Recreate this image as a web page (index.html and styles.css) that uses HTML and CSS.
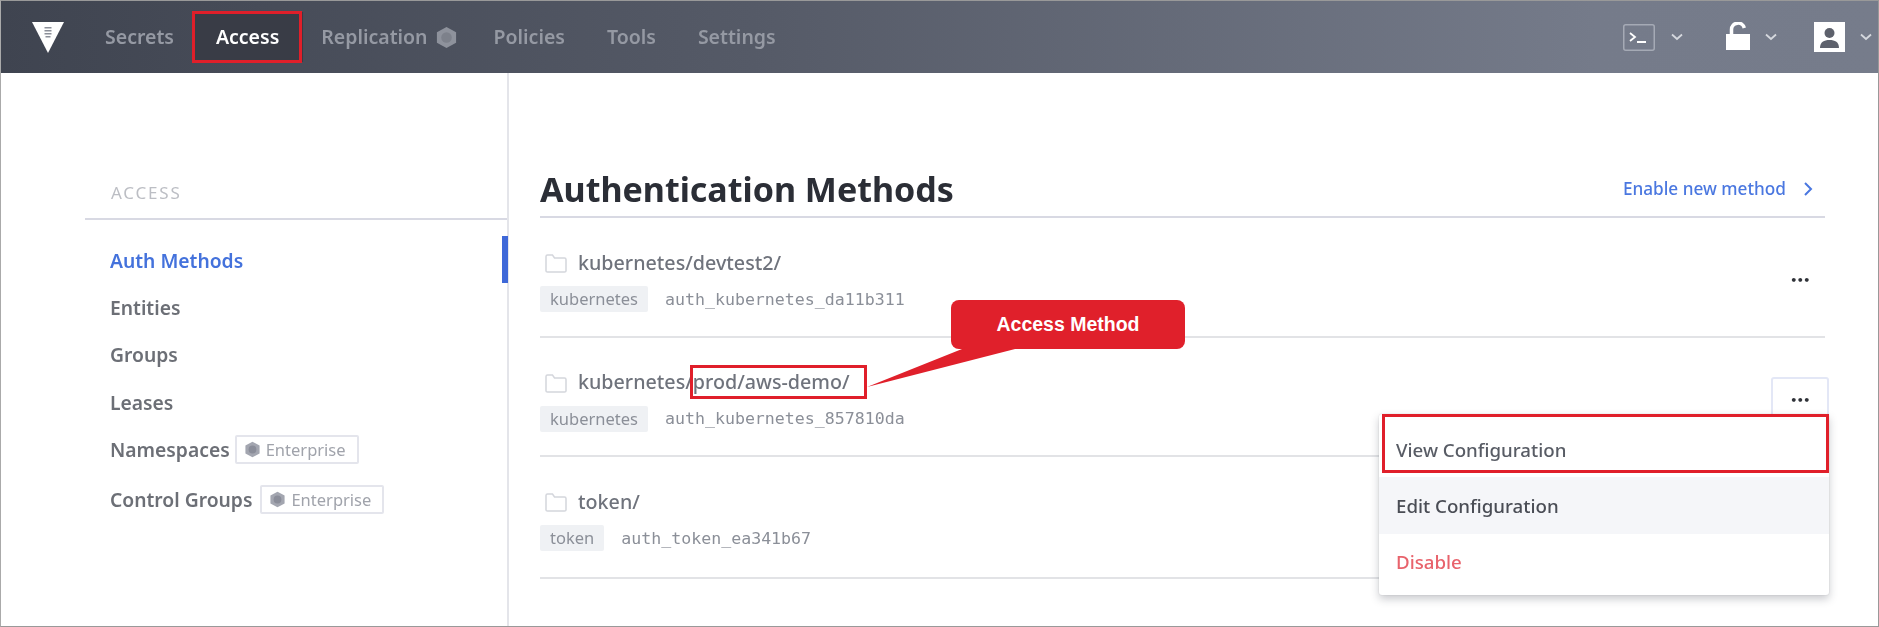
FILE: index.html
```html
<!DOCTYPE html>
<html lang="en">
<head>
<meta charset="utf-8">
<title>Authentication Methods</title>
<link rel="stylesheet" href="styles.css">
</head>
<body>
<div class="frame">
  <header class="topbar">
    <svg class="logo" viewBox="0 0 32 32"><path fill="#fff" d="M0 1h32L16 32z"/><path fill="#8b8f99" d="M12.500 6h7v1.500h-7zM12.500 9h7v1.500h-7zM12.500 12h7v1.500h-7zM13.500 15h5v1.500h-5z"/></svg>
    <nav class="nav">
      <a class="nav-link">Secrets</a>
      <a class="nav-link active">Access</a>
      <a class="nav-link with-hex">Replication <svg class="hex hex-lg" viewBox="0 0 24 24"><path fill="#8e929c" d="M12 1l10 5.500v11L12 23 2 17.500v-11z"/><circle cx="12" cy="12" r="5.500" fill="#7d818b"/></svg></a>
      <a class="nav-link">Policies</a>
      <a class="nav-link">Tools</a>
      <a class="nav-link">Settings</a>
    </nav>
    <div class="tools">
      <span class="tool tool-term">
        <svg class="term" viewBox="0 0 32 27"><rect x=".75" y=".75" width="30.500" height="25.500" rx="2" fill="none" stroke="#a5aab5" stroke-width="1.500"/><path d="M7 9l5 4-5 4M14 18h9" fill="none" stroke="#fff" stroke-width="1.800"/></svg>
        <svg class="chev" viewBox="0 0 12 8"><path d="M1 1.500l5 4.500 5-4.500" fill="none" stroke="#d5d8de" stroke-width="1.800"/></svg>
      </span>
      <span class="tool tool-lock">
        <svg class="lock" viewBox="0 0 24 28"><path d="M5.500 13V7.500a6.500 6.500 0 0 1 12.800-1.500" fill="none" stroke="#fff" stroke-width="3.500"/><path fill="#fff" d="M0 12h24v16H0z"/></svg>
        <svg class="chev" viewBox="0 0 12 8"><path d="M1 1.500l5 4.500 5-4.500" fill="none" stroke="#d5d8de" stroke-width="1.800"/></svg>
      </span>
      <span class="tool tool-user">
        <svg class="user" viewBox="0 0 31 30"><path fill="#fff" d="M0 0h31v30H0z"/><circle cx="15.500" cy="11" r="5" fill="#5d616c"/><path fill="#5d616c" d="M6 26c0-6 4-8 9.500-8s9.500 2 9.500 8z"/></svg>
        <svg class="chev" viewBox="0 0 12 8"><path d="M1 1.500l5 4.500 5-4.500" fill="none" stroke="#d5d8de" stroke-width="1.800"/></svg>
      </span>
    </div>
  </header>

  <div class="content">
    <aside class="sidebar">
      <div class="side-head">ACCESS</div>
      <ul class="side-list">
        <li class="side-item current">Auth Methods</li>
        <li class="side-item">Entities</li>
        <li class="side-item">Groups</li>
        <li class="side-item">Leases</li>
        <li class="side-item">Namespaces
          <span class="badge"><svg class="hex" viewBox="0 0 24 24"><path fill="#a3a6b0" d="M12 1l10 5.500v11L12 23 2 17.500v-11z"/><circle cx="12" cy="12" r="5.500" fill="#8a8d99"/></svg>Enterprise</span></li>
        <li class="side-item side-item-last">Control Groups
          <span class="badge"><svg class="hex" viewBox="0 0 24 24"><path fill="#a3a6b0" d="M12 1l10 5.500v11L12 23 2 17.500v-11z"/><circle cx="12" cy="12" r="5.500" fill="#8a8d99"/></svg>Enterprise</span></li>
      </ul>
    </aside>

    <main class="main">
      <div class="page-head">
        <h1 class="title">Authentication Methods</h1>
        <a class="enable">Enable new method <svg class="enable-chev" viewBox="0 0 10 16"><path d="M2 2l6 6-6 6" fill="none" stroke="#4a77e0" stroke-width="2"/></svg></a>
      </div>

      <section class="row">
        <div class="row-info">
          <div class="row-title"><svg class="folder" viewBox="0 0 22 19"><path d="M1 17V2.500C1 1.700 1.500 1 2.500 1h5l2 3h10c1 0 1.500.7 1.500 1.500V17c0 .8-.5 1-1.500 1h-17C1.500 18 1 17.800 1 17z" fill="none" stroke="#d4d6dc" stroke-width="1.500"/></svg>kubernetes/devtest2/</div>
          <div class="row-meta"><span class="tag">kubernetes</span><code class="accessor">auth_kubernetes_da11b311</code></div>
        </div>
        <button class="more">•••</button>
      </section>

      <section class="row">
        <div class="row-info">
          <div class="row-title"><svg class="folder" viewBox="0 0 22 19"><path d="M1 17V2.500C1 1.700 1.500 1 2.500 1h5l2 3h10c1 0 1.500.7 1.500 1.500V17c0 .8-.5 1-1.500 1h-17C1.500 18 1 17.800 1 17z" fill="none" stroke="#d4d6dc" stroke-width="1.500"/></svg>kubernetes/prod/aws-demo/</div>
          <div class="row-meta"><span class="tag">kubernetes</span><code class="accessor">auth_kubernetes_857810da</code></div>
        </div>
        <button class="more open">•••</button>
      </section>

      <section class="row row-last">
        <div class="row-info">
          <div class="row-title"><svg class="folder" viewBox="0 0 22 19"><path d="M1 17V2.500C1 1.700 1.500 1 2.500 1h5l2 3h10c1 0 1.500.7 1.500 1.500V17c0 .8-.5 1-1.500 1h-17C1.500 18 1 17.800 1 17z" fill="none" stroke="#d4d6dc" stroke-width="1.500"/></svg>token/</div>
          <div class="row-meta"><span class="tag">token</span><code class="accessor">auth_token_ea341b67</code></div>
        </div>
      </section>

      <div class="menu">
        <div class="menu-item">View Configuration</div>
        <div class="menu-item hover">Edit Configuration</div>
        <div class="menu-item danger">Disable</div>
      </div>
    </main>
  </div>

  <div class="mark mark-access"></div>
  <div class="mark mark-path"></div>
  <div class="mark mark-view"></div>
  <div class="callout">Access Method</div>
  <svg class="callout-tail" viewBox="0 0 160 45"><path fill="#e0202b" d="M0 40L100 0h56z"/></svg>
</div>
</body>
</html>
```
FILE: styles.css
```css
* { box-sizing: border-box; }
html, body { margin: 0; padding: 0; background: #fff; }
body { font-family: "Noto Sans", "Open Sans", sans-serif; }

.frame {
  position: relative;
  width: 1879px;
  height: 627px;
  overflow: hidden;
  border: 1px solid #999;
  border-left-color: #aaa;
}

.topbar {
  display: flex;
  align-items: center;
  height: 72px;
  padding-left: 31px;
  background: linear-gradient(90deg, #3f4450 0%, #555a67 40%, #757b8a 85%, #767c8b 100%);
  filter: blur(.6px);
}
.logo { width: 32px; height: 32px; margin-right: 41px; flex: none; }
.nav { display: flex; align-items: center; gap: 42px; }
.nav-link {
  display: flex;
  align-items: center;
  color: #9599a3;
  font-size: 19.500px;
  font-weight: 600;
  line-height: 26px;
}
.nav-link.active {
  align-self: stretch;
  margin: 0 -24px;
  padding: 12px 24px;
  background: #393c46;
  color: #fff;
}
.with-hex { gap: 7px; margin-right: -6px; }
.hex { width: 17px; height: 17px; flex: none; }
.hex-lg { width: 23px; height: 23px; }

.tools { position: absolute; top: 0; right: 0; height: 72px; display: flex; align-items: center; padding-right: 6px; }
.tool { display: flex; align-items: center; }
.tool-term { gap: 16px; margin-right: 43px; }
.tool-lock { gap: 15px; margin-right: 37px; }
.tool-user { gap: 15px; }
.term { width: 32px; height: 27px; }
.lock { width: 24px; height: 28px; margin-top: -2px; }
.user { width: 31px; height: 30px; }
.chev { width: 12px; height: 8px; }

.content { display: flex; height: 553px; filter: blur(.55px); }

.sidebar {
  flex: none;
  width: 508px;
  padding: 101px 0 0 84px;
  border-right: 2px solid #e4e5ea;
}
.side-head {
  height: 46px;
  padding: 7px 0 0 26px;
  border-bottom: 2px solid #d8d9e3;
  color: #bcbec4;
  font-size: 17px;
  letter-spacing: 1.800px;
  line-height: 24px;
}
.side-list { list-style: none; margin: 17px 0 0; padding: 0 0 0 25px; }
.side-item {
  display: flex;
  align-items: center;
  height: 47.200px;
  color: #6c6f76;
  font-size: 19.300px;
  font-weight: 600;
  gap: 5px;
}
.side-item-last { margin-top: 3px; gap: 8px; }
.side-item.current { position: relative; color: #4472dc; }
.side-item.current::after {
  content: "";
  position: absolute;
  right: -1px;
  top: -1px;
  width: 6px;
  height: 47px;
  background: #3e68d8;
}
.badge {
  display: inline-flex;
  align-items: center;
  gap: 5px;
  height: 29px;
  padding: 0 11px 0 7px;
  border: 2px solid #e4e5ec;
  border-radius: 2px;
  color: #a0a3ab;
  font-size: 16.500px;
  font-weight: 400;
}

.main { position: relative; flex: 1; padding: 0 53px 0 31px; }
.page-head {
  display: flex;
  align-items: center;
  justify-content: space-between;
  height: 145px;
  padding-top: 88px;
  border-bottom: 2px solid #d8d9e3;
}
.title { margin: 0; color: #2b2e36; font-size: 34px; font-weight: 700; line-height: 44px; }
.enable { display: flex; align-items: center; gap: 17px; margin-right: 12px; color: #4a77e0; font-size: 17.200px; font-weight: 500; }
.enable-chev { width: 10px; height: 16px; }

.row {
  display: flex;
  align-items: center;
  justify-content: space-between;
  height: 119.500px;
  border-bottom: 2px solid #e2e3e6;
}
.row-last { height: 122px; align-items: flex-start; padding-top: 23px; }
.row-info { padding-top: 7px; }
.row-title { display: flex; align-items: center; gap: 11px; padding-left: 5px; height: 28px; color: #6f737c; font-size: 19.700px; font-weight: 500; }
.folder { width: 22px; height: 19px; flex: none; margin-top: 3px; }
.row-meta { display: flex; align-items: center; gap: 17px; margin-top: 10px; }
.tag { height: 26px; padding: 0 10px; background: #eff1f4; border-radius: 2px; color: #8b8f98; font-size: 16.500px; line-height: 25px; }
.accessor { color: #8b8f98; font-family: "DejaVu Sans Mono", monospace; font-size: 16.600px; }

.more {
  width: 58px;
  height: 46px;
  margin-right: -4px;
  padding: 0;
  border: 2px solid transparent;
  border-radius: 3px;
  background: none;
  color: #2f3238;
  font-family: "DejaVu Sans", sans-serif;
  font-size: 11px;
  font-weight: 700;
  letter-spacing: -.5px;
  position: relative;
  top: 4px;
}
.more.open { border-color: #e3e7f6; }

.menu {
  position: absolute;
  top: 341px;
  right: 49px;
  width: 450px;
  height: 181px;
  background: #fff;
  border-radius: 3px;
  box-shadow: 0 4px 8px rgba(40, 44, 60, .25), 0 0 2px rgba(40, 44, 60, .12);
  padding-top: 6px;
  color: #585c65;
  font-size: 18.700px;
  font-weight: 500;
}
.menu-item { display: flex; align-items: center; height: 57px; padding-left: 17px; }
.menu-item:first-child { padding-top: 2px; }
.menu-item.hover { background: #f5f6f9; color: #4a4d55; }
.menu-item.danger { color: #e8636c; padding-bottom: 2px; }

.mark { position: absolute; border: 3px solid #e01f2a; }
.mark-access { left: 191px; top: 10px; width: 110px; height: 52px; }
.mark-path { left: 689px; top: 364px; width: 177px; height: 34px; }
.mark-view { left: 1381px; top: 413px; width: 447px; height: 59px; }

.callout {
  position: absolute;
  left: 950px;
  top: 299px;
  width: 234px;
  height: 49px;
  display: flex;
  align-items: center;
  justify-content: center;
  background: #e0202b;
  border-radius: 8px;
  color: #fff;
  font-family: "Liberation Sans", Arial, sans-serif;
  font-size: 19.500px;
  font-weight: 700;
}
.callout-tail { position: absolute; left: 866px; top: 346px; width: 160px; height: 45px; }
```
